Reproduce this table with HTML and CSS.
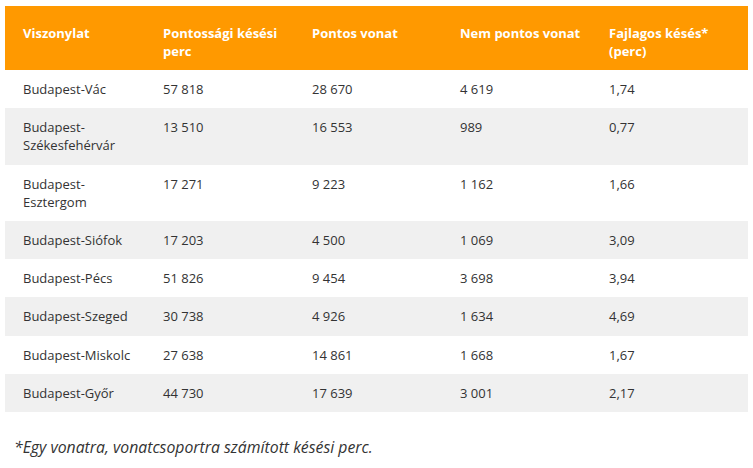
FILE: index.html
```html
<!DOCTYPE html>
<html lang="hu">
<head>
<meta charset="utf-8">
<link rel="stylesheet" href="styles.css">
</head>
<body>
<div class="page">
  <table class="data">
    <colgroup>
      <col class="c1"><col class="c2"><col class="c3"><col class="c4"><col class="c5">
    </colgroup>
    <thead>
      <tr>
        <th>Viszonylat</th>
        <th>Pontossági késési perc</th>
        <th>Pontos vonat</th>
        <th>Nem pontos vonat</th>
        <th>Fajlagos késés* (perc)</th>
      </tr>
    </thead>
    <tbody>
      <tr><td>Budapest-Vác</td><td>57 818</td><td>28 670</td><td>4 619</td><td>1,74</td></tr>
      <tr><td>Budapest-<br>Székesfehérvár</td><td>13 510</td><td>16 553</td><td>989</td><td>0,77</td></tr>
      <tr><td>Budapest-<br>Esztergom</td><td>17 271</td><td>9 223</td><td>1 162</td><td>1,66</td></tr>
      <tr><td>Budapest-Siófok</td><td>17 203</td><td>4 500</td><td>1 069</td><td>3,09</td></tr>
      <tr><td>Budapest-Pécs</td><td>51 826</td><td>9 454</td><td>3 698</td><td>3,94</td></tr>
      <tr><td>Budapest-Szeged</td><td>30 738</td><td>4 926</td><td>1 634</td><td>4,69</td></tr>
      <tr><td>Budapest-Miskolc</td><td>27 638</td><td>14 861</td><td>1 668</td><td>1,67</td></tr>
      <tr><td>Budapest-Győr</td><td>44 730</td><td>17 639</td><td>3 001</td><td>2,17</td></tr>
    </tbody>
  </table>
  <p class="note">*Egy vonatra, vonatcsoportra számított késési perc.</p>
</div>
</body>
</html>
```
FILE: styles.css
```css
html, body {
  margin: 0;
  padding: 0;
  background: #ffffff;
}
body {
  font-family: "Open Sans", "Liberation Sans", sans-serif;
  color: #333333;
}
.page {
  padding: 6px 5px 0 5px;
}
.data {
  width: 743px;
  border-collapse: collapse;
  table-layout: fixed;
}
.c1 { width: 140px; }
.c2 { width: 149px; }
.c3 { width: 148px; }
.c4 { width: 149px; }
.c5 { width: 157px; }
.data th {
  background: #ff9900;
  color: #ffffff;
  font-weight: 700;
  font-size: 13px;
  line-height: 18px;
  text-align: left;
  vertical-align: top;
  padding: 18px 4px 10px 18px;
}
.data td {
  font-size: 13px;
  line-height: 18px;
  vertical-align: top;
  padding: 10px 4px 10.25px 18px;
  color: #333333;
}
.data tbody tr:nth-child(even) td {
  background: #f0f0f0;
}
.note {
  margin: 24px 0 0 9px;
  font-size: 15.8px;
  line-height: 22px;
  font-style: italic;
  color: #333333;
}
```
